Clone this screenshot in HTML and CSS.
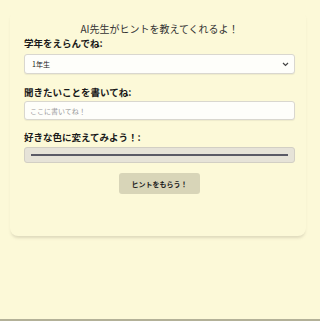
FILE: index.html
```html
<!DOCTYPE html>
<html lang="ja">
<head>
<meta charset="utf-8">
<link rel="stylesheet" href="styles.css">
</head>
<body>
<div class="card">
  <p class="title">AI先生がヒントを教えてくれるよ！</p>
  <label class="label first">学年をえらんでね:</label>
  <div class="select">
    <span>1年生</span>
    <svg class="chev" width="7" height="5" viewBox="0 0 7 5"><path d="M1 1 L3.5 3.5 L6 1" fill="none" stroke="#444" stroke-width="1.2"/></svg>
  </div>
  <label class="label second">聞きたいことを書いてね:</label>
  <div class="input"><span class="ph">ここに書いてね！</span></div>
  <label class="label third">好きな色に変えてみよう！:</label>
  <div class="color"><div class="swatch"></div></div>
  <div class="btn-row"><button class="btn">ヒントをもらう！</button></div>
</div>
<div class="bottom-line"></div>
</body>
</html>
```
FILE: styles.css
```css
html, body {
  margin: 0;
  padding: 0;
}
body {
  height: 321px;
  background: #fcf9d8;
  font-family: "Noto Sans CJK JP", "Noto Sans", sans-serif;
  color: #222;
  display: flex;
  flex-direction: column;
  box-sizing: border-box;
}
.card {
  margin: 10px 14px 0 10px;
  padding: 12px 11px 42px 14px;
  border-radius: 8px;
  background: transparent;
  box-shadow: 0 3px 3px -1px rgba(120, 110, 90, 0.22);
  display: flex;
  flex-direction: column;
}
.title {
  margin: 0;
  font-size: 10px;
  line-height: 14px;
  text-align: center;
  color: #333;
}
.label {
  font-size: 9.5px;
  line-height: 14px;
  font-weight: bold;
  color: #1a1a1a;
}
.first { margin-bottom: 4px; }
.second { margin-top: 11px; margin-bottom: 2px; }
.third { margin-top: 10px; margin-bottom: 3px; }
.select, .input {
  box-sizing: border-box;
  background: #fefefa;
  border: 1px solid #d9d7cf;
  border-radius: 3px;
  display: flex;
  align-items: center;
  font-size: 7px;
  box-shadow: 0 1px 1px rgba(0, 0, 0, 0.06);
}
.select {
  height: 20px;
  padding: 0 5px 0 7px;
  justify-content: space-between;
  color: #222;
}
.input {
  height: 19px;
  padding: 0 5px;
}
.ph {
  color: #9a9a9a;
}
.color {
  box-sizing: border-box;
  height: 16px;
  background: #e6e3d8;
  border: 1px solid #d2cfc4;
  border-radius: 3px;
  padding: 0 6px;
  display: flex;
  align-items: center;
}
.swatch {
  flex: 1;
  height: 1.5px;
  background: #5a5a66;
}
.btn-row {
  display: flex;
  justify-content: center;
  margin-top: 10px;
}
.btn {
  width: 81px;
  height: 21px;
  border: none;
  border-radius: 3px;
  background: #d8d5b8;
  font-family: "Noto Sans CJK JP", "Noto Sans", sans-serif;
  font-size: 7px;
  font-weight: bold;
  color: #222;
  padding: 0;
}
.bottom-line {
  margin-top: auto;
  height: 2px;
  background: #b3b198;
}
```
